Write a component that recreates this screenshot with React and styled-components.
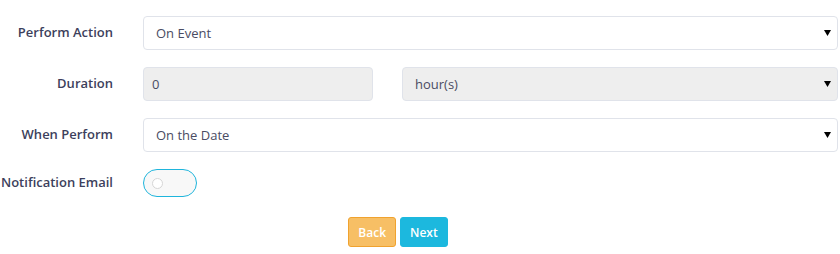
import React, { useState } from 'react'
import styled, { createGlobalStyle } from 'styled-components'

const GlobalStyle = createGlobalStyle`
  body {
    margin: 0;
    background: #fff;
    font-family: 'Open Sans', 'Liberation Sans', sans-serif;
  }
`

const Form = styled.form`
  width: 838px;
  padding-top: 16px;
`

const Row = styled.div`
  display: grid;
  grid-template-columns: 113px 1fr;
  column-gap: 30px;
  align-items: center;
  margin-bottom: ${p => p.gap || 17}px;
`

const Label = styled.label`
  text-align: right;
  font-size: 13px;
  font-weight: 600;
  color: #3d3f5c;
  white-space: nowrap;
  margin-top: -3px;
`

const Split = styled.div`
  display: grid;
  grid-template-columns: 230px 1fr;
  column-gap: 29px;
`

const arrow = `url("data:image/svg+xml;utf8,<svg xmlns='http://www.w3.org/2000/svg' width='7' height='6'><polygon points='0,0 7,0 3.5,6' fill='black'/></svg>")`

const Select = styled.select`
  appearance: none;
  -webkit-appearance: none;
  width: 100%;
  height: 34px;
  box-sizing: border-box;
  border: 1px solid #e0e3ea;
  border-radius: 4px;
  padding: 0 30px 0 12px;
  font-family: inherit;
  font-size: 13px;
  color: #4a4c63;
  background: ${p => (p.disabled ? '#eeeeee' : '#fff')} ${arrow} no-repeat right 6px center;
  opacity: 1;
  outline: none;
`

const Input = styled.input`
  width: 100%;
  height: 34px;
  box-sizing: border-box;
  border: 1px solid #e0e3ea;
  border-radius: 4px;
  padding: 0 8px;
  font-family: inherit;
  font-size: 13px;
  color: #4a4c63;
  background: #eeeeee;
  outline: none;
`

const Toggle = styled.button`
  width: 54px;
  height: 28px;
  box-sizing: border-box;
  border: 1px solid #1fb5dc;
  border-radius: 14px;
  background: #f8f8f8;
  padding: 0 0 0 8px;
  display: flex;
  align-items: center;
  cursor: pointer;
`

const Knob = styled.span`
  width: 11px;
  height: 11px;
  box-sizing: border-box;
  border: 1px solid #d6d6d6;
  border-radius: 50%;
  background: #fff;
`

const Actions = styled.div`
  display: flex;
  justify-content: center;
  gap: 4px;
  margin-left: -42px;
`

const Button = styled.button`
  height: 30px;
  box-sizing: border-box;
  padding: 0 9px;
  border-radius: 3px;
  border: 1px solid ${p => (p.variant === 'warning' ? '#f0a22e' : '#1cb8de')};
  background: ${p => (p.variant === 'warning' ? '#f7bf65' : '#1cb8de')};
  color: #fff;
  font-family: inherit;
  font-size: 12px;
  font-weight: 600;
  cursor: pointer;
`

export default function App() {
  const [notify, setNotify] = useState(false)
  return (
    <>
      <GlobalStyle />
      <Form onSubmit={e => e.preventDefault()}>
        <Row>
          <Label>Perform Action</Label>
          <Select defaultValue="event">
            <option value="event">On Event</option>
            <option value="schedule">On Schedule</option>
          </Select>
        </Row>
        <Row>
          <Label>Duration</Label>
          <Split>
            <Input value="0" disabled readOnly />
            <Select disabled defaultValue="hours">
              <option value="hours">hour(s)</option>
              <option value="days">day(s)</option>
            </Select>
          </Split>
        </Row>
        <Row>
          <Label>When Perform</Label>
          <Select defaultValue="date">
            <option value="date">On the Date</option>
            <option value="before">Before the Date</option>
          </Select>
        </Row>
        <Row gap={20}>
          <Label>Notification Email</Label>
          <div>
            <Toggle type="button" onClick={() => setNotify(!notify)}>
              <Knob />
            </Toggle>
          </div>
        </Row>
        <Actions>
          <Button variant="warning">Back</Button>
          <Button variant="info">Next</Button>
        </Actions>
      </Form>
    </>
  )
}
